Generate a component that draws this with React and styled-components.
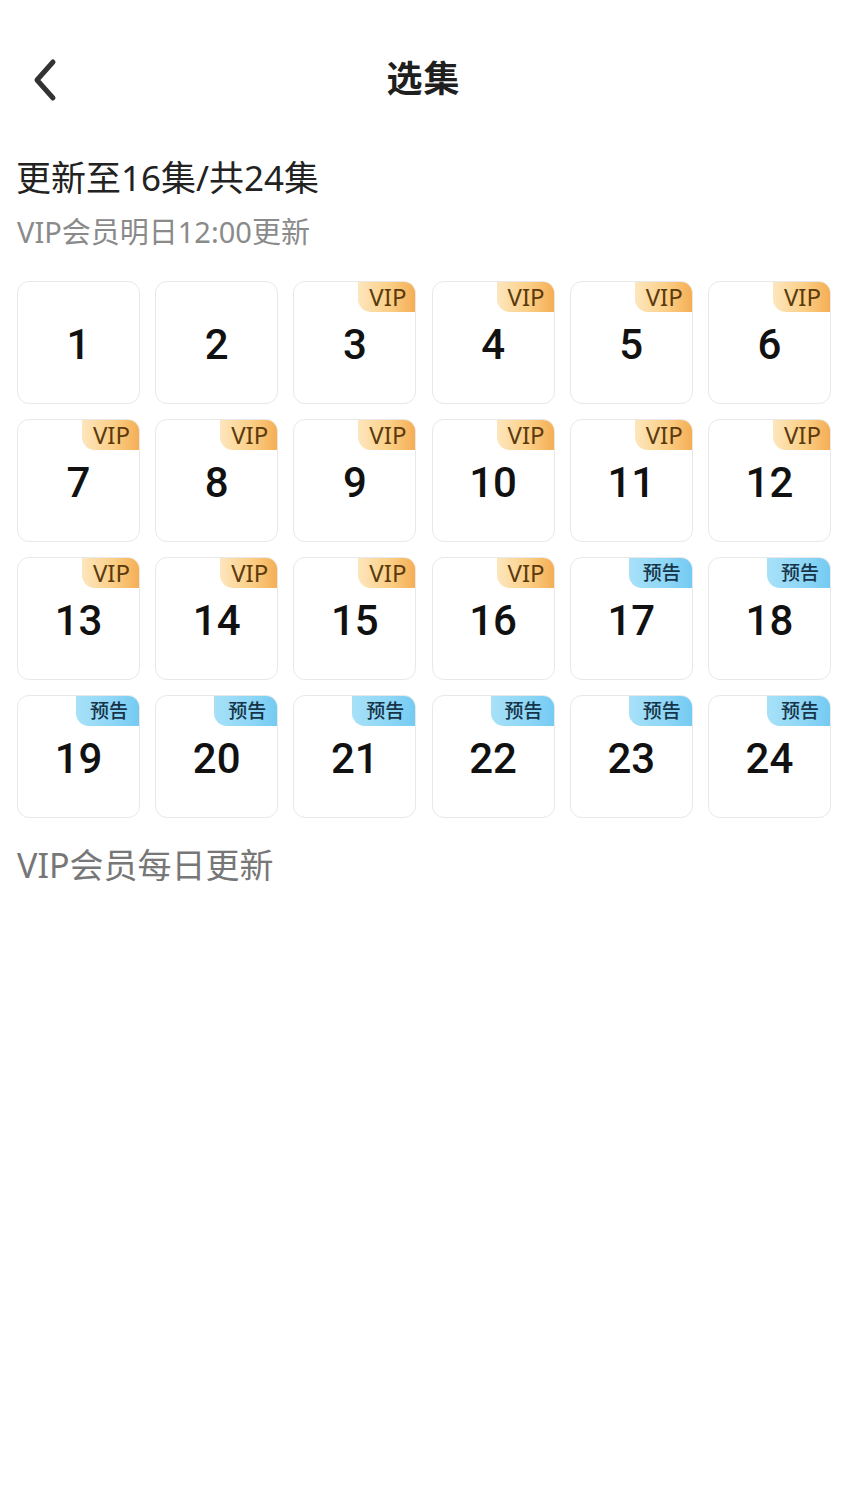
import React from 'react';
import styled, { createGlobalStyle } from 'styled-components';

const GlobalStyle = createGlobalStyle`
    html, body {
        margin: 0;
        padding: 0;
        background: #ffffff;
    }
    body {
        font-family: "Noto Sans", "Noto Sans CJK SC", sans-serif;
        color: #1a1a1a;
    }
`;

const episodes = Array.from({ length: 24 }, (_, i) => {
    const num = i + 1;
    let tag = null;
    if (num >= 3 && num <= 16) tag = 'vip';
    if (num >= 17) tag = 'preview';
    return { num, tag };
});

const App = () => {
    return (
        <Page>
            <GlobalStyle />
            <Header>
                <BackButton aria-label="back">
                    <svg width="28" height="44" viewBox="0 0 28 44">
                        <path d="M22 4 L6 22 L22 40" fill="none" stroke="#333" strokeWidth="5" strokeLinecap="round" strokeLinejoin="round" />
                    </svg>
                </BackButton>
                <Title>选集</Title>
            </Header>
            <Info>
                <Status>更新至16集/共24集</Status>
                <Note>VIP会员明日12:00更新</Note>
            </Info>
            <Grid>
                {episodes.map((ep) => (
                    <Card key={ep.num}>
                        {ep.tag === 'vip' && <Badge $kind="vip">VIP</Badge>}
                        {ep.tag === 'preview' && <Badge $kind="preview">预告</Badge>}
                        <Num>{ep.num}</Num>
                    </Card>
                ))}
            </Grid>
            <Footer>VIP会员每日更新</Footer>
        </Page>
    );
};

export default App;

const Page = styled.div`
    width: 846px;
    min-height: 1507px;
    box-sizing: border-box;
    padding: 0 16px 0 17px;
    background: #fff;
`;

const Header = styled.header`
    position: relative;
    height: 158px;
    display: flex;
    align-items: flex-start;
    justify-content: center;
`;

const BackButton = styled.div`
    position: absolute;
    left: 14px;
    top: 58px;
    width: 28px;
    height: 44px;
`;

const Title = styled.h1`
    margin: 56px 0 0;
    font-size: 36px;
    line-height: 46px;
    font-weight: 700;
    color: #1f1f1f;
    letter-spacing: 1px;
`;

const Info = styled.div`
    display: flex;
    flex-direction: column;
`;

const Status = styled.div`
    font-size: 35px;
    line-height: 40px;
    color: #222;
    margin-left: -1px;
`;

const Note = styled.div`
    margin-top: 16px;
    font-size: 29px;
    line-height: 36px;
    color: #8a8a8a;
`;

const Grid = styled.div`
    margin-top: 31px;
    display: grid;
    grid-template-columns: repeat(6, 123px);
    grid-auto-rows: 123px;
    column-gap: 15.2px;
    row-gap: 15px;
`;

const Card = styled.div`
    position: relative;
    box-sizing: border-box;
    border: 1.5px solid #e8e8e8;
    border-radius: 12px;
    display: flex;
    align-items: center;
    justify-content: center;
    overflow: hidden;
`;

const Badge = styled.div`
    position: absolute;
    top: 0;
    right: 0;
    height: 30px;
    width: ${(p) => (p.$kind === 'vip' ? '57px' : '63px')};
    border-bottom-left-radius: 13px;
    display: flex;
    align-items: center;
    justify-content: center;
    box-sizing: border-box;
    padding-left: ${(p) => (p.$kind === 'vip' ? '2px' : '3px')};
    background: ${(p) =>
        p.$kind === 'vip'
            ? 'linear-gradient(90deg, #fde6bd 0%, #fbcf86 55%, #f5ae55 100%)'
            : 'linear-gradient(90deg, #a7e1f8 0%, #8dd6f6 60%, #74caf2 100%)'};
    color: ${(p) => (p.$kind === 'vip' ? '#5b3a0e' : '#163449')};
    font-size: ${(p) => (p.$kind === 'vip' ? '24px' : '19px')};
    font-weight: ${(p) => (p.$kind === 'vip' ? 400 : 500)};
    line-height: 1;
`;

const Num = styled.div`
    font-family: Roboto, "Noto Sans", sans-serif;
    font-size: 42px;
    font-weight: 500;
    color: #111;
    line-height: 1;
    margin-top: 4px;
`;

const Footer = styled.div`
    margin-top: 27px;
    font-size: 34px;
    line-height: 40px;
    color: #777;
`;
